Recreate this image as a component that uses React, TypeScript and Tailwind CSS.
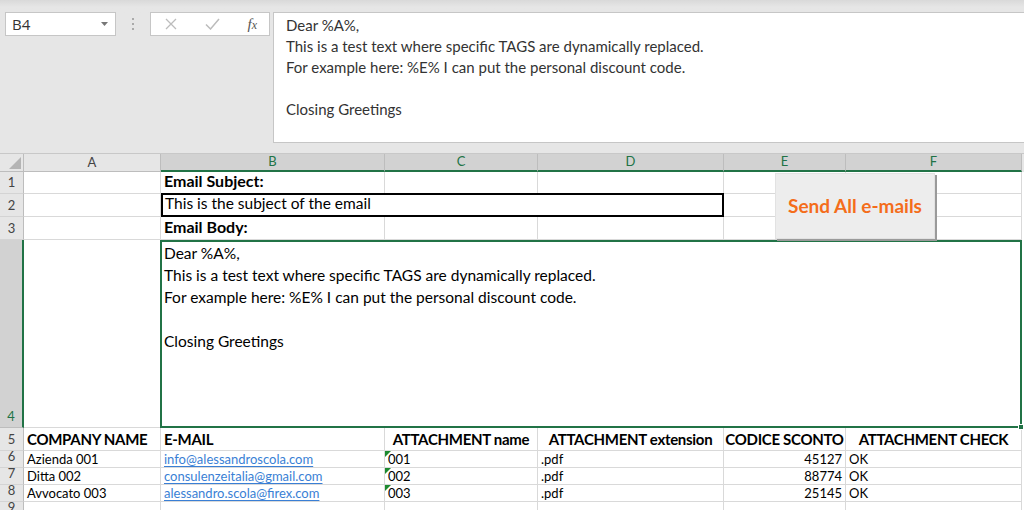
import React from "react";

const cols = ["A", "B", "C", "D", "E", "F"];

const bodyLines = [
    "Dear %A%,",
    "This is a test text where specific TAGS are dynamically replaced.",
    "For example here: %E% I can put the personal discount code.",
    "",
    "Closing Greetings",
];

const contacts = [
    { name: "Azienda 001", email: "info@alessandroscola.com", file: "001", code: 45127 },
    { name: "Ditta 002", email: "consulenzeitalia@gmail.com", file: "002", code: 88774 },
    { name: "Avvocato 003", email: "alessandro.scola@firex.com", file: "003", code: 25145 },
];

function RowHead({ n, selected }: { n: number | string; selected?: boolean }) {
    return (
        <div
            className={`flex items-end justify-center pb-[1px] text-[13px] border-b border-r ${
                selected
                    ? "bg-[#d2d2d2] text-[#217346] border-b-[#bdbdbd] border-r-[#217346] border-r-2"
                    : "bg-[#e6e6e6] text-[#444] border-b-[#d4d4d4] border-r-[#bdbdbd]"
            }`}
        >
            {n}
        </div>
    );
}

function Cell({ children, className = "" }: { children?: React.ReactNode; className?: string }) {
    return (
        <div className={`flex items-end px-[3px] border-r border-b border-[#d9d9d9] whitespace-nowrap overflow-hidden ${className}`}>
            {children}
        </div>
    );
}

const head = "text-[15px] font-bold tracking-[-0.3px]";
const small = "text-[13px] leading-[16px]";

export default function App() {
    return (
        <div className="w-[1024px] h-[510px] overflow-hidden bg-white font-[Lato,sans-serif] text-black relative">
            {/* Formula bar area */}
            <div className="h-[154px] bg-gradient-to-b from-[#d9d9d9] via-[#e6e6e6] to-[#e6e6e6] [background-size:100%_14px] bg-no-repeat bg-[#e6e6e6] flex pt-[12px] border-b border-[#c8c8c8]">
                <div className="flex items-start h-[24px]">
                    <div className="ml-[5px] w-[111px] h-[24px] bg-white border border-[#c6c6c6] flex items-center justify-between pl-[6px] pr-[7px]">
                        <span className="text-[15px] text-[#333] font-['Open_Sans',sans-serif]">B4</span>
                        <svg width="7" height="4" viewBox="0 0 7 4"><path d="M0 0h7L3.5 4z" fill="#777" /></svg>
                    </div>
                    <div className="w-[34px] h-[24px] flex flex-col items-center justify-center gap-[3px]">
                        <span className="w-[2px] h-[2px] bg-[#aaa]" />
                        <span className="w-[2px] h-[2px] bg-[#aaa]" />
                        <span className="w-[2px] h-[2px] bg-[#aaa]" />
                    </div>
                    <div className="w-[120px] h-[24px] bg-white border border-[#c6c6c6] flex items-center justify-between pl-[14px] pr-[12px]">
                        <svg width="12" height="12" viewBox="0 0 12 12">
                            <path d="M1 1l10 10M11 1L1 11" stroke="#bcbcbc" strokeWidth="1.3" />
                        </svg>
                        <svg width="15" height="12" viewBox="0 0 15 12">
                            <path d="M1 6.5l4.5 4.5L14 1" stroke="#bcbcbc" strokeWidth="1.5" fill="none" />
                        </svg>
                        <span className="font-['Liberation_Serif',serif] italic text-[15px] text-[#555] leading-none">
                            f<span className="text-[12px]">x</span>
                        </span>
                    </div>
                </div>
                <div className="ml-[3px] flex-1 h-[131px] bg-white border border-[#c6c6c6] border-r-0 pl-[12px] pt-[2px] text-[15px] leading-[21px] text-[#333]">
                    {bodyLines.map((l, i) => (
                        <div key={i} className="h-[21px]">{l}</div>
                    ))}
                </div>
            </div>

            {/* Sheet grid */}
            <div className="grid grid-cols-[24px_137px_224px_153px_186px_122px_176px_2px] grid-rows-[18px_22px_23px_23px_188px_23px_17px_17px_17px_17px] relative">
                {/* column headers */}
                <div className="bg-[#e6e6e6] border-r border-b border-[#bdbdbd] flex items-end justify-end p-[2px]">
                    <svg width="12" height="12" viewBox="0 0 12 12"><path d="M12 0v12H0z" fill="#b4b4b4" /></svg>
                </div>
                {cols.map((c) => (
                    <div
                        key={c}
                        className={`flex items-center justify-center text-[13px] border-r ${
                            c === "A"
                                ? "bg-[#e6e6e6] text-[#444] border-r-[#bdbdbd] border-b border-b-[#bdbdbd]"
                                : "bg-[#d2d2d2] text-[#217346] border-r-[#bdbdbd] border-b-2 border-b-[#217346]"
                        }`}
                    >
                        {c}
                    </div>
                ))}
                <div className="bg-[#e6e6e6]" />

                {/* row 1 */}
                <RowHead n={1} />
                <Cell />
                <Cell className="text-[16px] font-bold">Email Subject:</Cell>
                <Cell />
                <Cell />
                <Cell />
                <Cell />
                <div />

                {/* row 2 */}
                <RowHead n={2} />
                <Cell />
                <div className="col-span-3 border-2 border-black flex items-end px-[2px] text-[15.5px] whitespace-nowrap -mt-[1px]">
                    This is the subject of the email
                </div>
                <Cell />
                <Cell />
                <div />

                {/* row 3 */}
                <RowHead n={3} />
                <Cell />
                <Cell className="text-[16px] font-bold">Email Body:</Cell>
                <Cell />
                <Cell />
                <Cell />
                <Cell />
                <div />

                {/* row 4 */}
                <RowHead n={4} selected />
                <Cell />
                <div className="col-span-5 border-2 border-[#217346] -ml-[1px] px-[2px] text-[15.5px] leading-[22px] relative">
                    {bodyLines.map((l, i) => (
                        <div key={i} className="h-[22px]">{l}</div>
                    ))}
                    <span className="absolute -right-[4px] -bottom-[4px] w-[6px] h-[6px] bg-[#217346] border border-white" />
                </div>
                <div />

                {/* row 5 */}
                <RowHead n={5} />
                <Cell className={head}>COMPANY NAME</Cell>
                <Cell className={head}>E-MAIL</Cell>
                <Cell className={`${head} justify-center`}>ATTACHMENT name</Cell>
                <Cell className={`${head} justify-center`}>ATTACHMENT extension</Cell>
                <Cell className={`${head} justify-center`}>CODICE SCONTO</Cell>
                <Cell className={`${head} justify-center`}>ATTACHMENT CHECK</Cell>
                <div />

                {/* rows 6-8 */}
                {contacts.map((r, i) => (
                    <React.Fragment key={r.file}>
                        <RowHead n={6 + i} />
                        <Cell className={small}>{r.name}</Cell>
                        <Cell className={small}>
                            <span className="text-[#3a7fd5] underline underline-offset-2 decoration-[#3a7fd5]">{r.email}</span>
                        </Cell>
                        <Cell className={`${small} relative`}>
                            <span className="absolute left-0 top-0 w-0 h-0 border-t-[6px] border-r-[6px] border-t-[#1d8a2f] border-r-transparent" />
                            {r.file}
                        </Cell>
                        <Cell className={small}>.pdf</Cell>
                        <Cell className={`${small} justify-end`}>{r.code}</Cell>
                        <Cell className={small}>OK</Cell>
                        <div />
                    </React.Fragment>
                ))}

                {/* row 9 */}
                <RowHead n={9} />
                <Cell />
                <Cell />
                <Cell />
                <Cell />
                <Cell />
                <Cell />
                <div />

                {/* Send button (shape over cells E1:E3) */}
                <button className="absolute left-[775px] top-[19px] w-[160px] h-[66px] bg-[#ededed] border border-[#e2e2e2] shadow-[2px_2px_0_#9a9a9a] flex items-center justify-center text-[19px] font-bold text-[#f46d1b]">
                    Send All e-mails
                </button>
            </div>
        </div>
    );
}
